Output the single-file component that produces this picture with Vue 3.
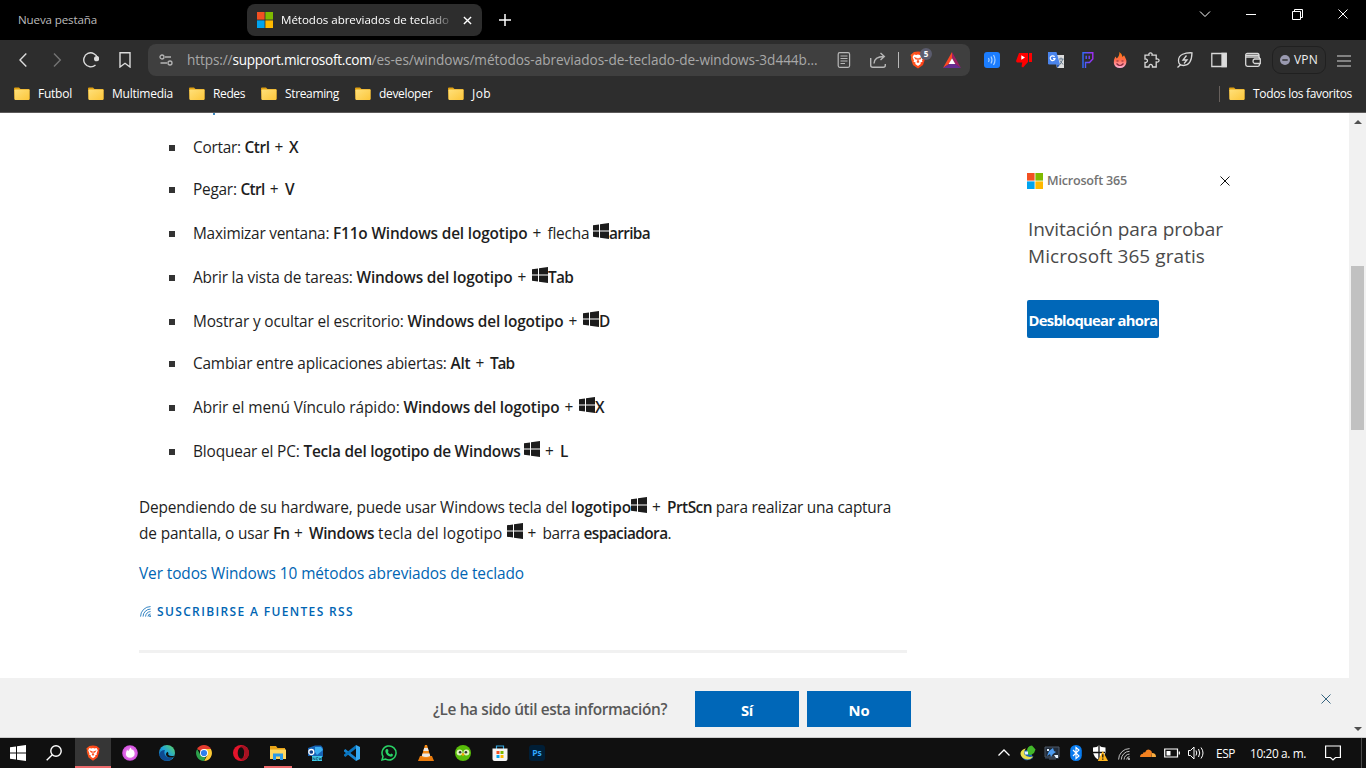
<script setup>
// Sets the tracking of a text run so that it takes the given width in pixels.
const vFit = {
  mounted(el, { value }) {
    const n = Array.from(el.textContent).length
    const natural = el.getBoundingClientRect().width
    el.style.letterSpacing = (value - natural) / n + 'px'
  },
}

const bookmarks = [
  { name: 'Futbol', w: 34 },
  { name: 'Multimedia', w: 61 },
  { name: 'Redes', w: 32 },
  { name: 'Streaming', w: 54 },
  { name: 'developer', w: 53 },
  { name: 'Job', w: 19 },
]

// Text runs: [text, width, bold]; 'win' stands for the Windows logo.
const shortcuts = [
  [['Cortar: ', 51.5], ['Ctrl', 25, 1], [' + ', 19.5], ['X', 10, 1]],
  [['Pegar: ', 47.5], ['Ctrl', 24, 1], [' + ', 20.5], ['V', 10, 1]],
  [['Maximizar ventana: ', 140], ['F11o Windows del logotipo', 194.5, 1], [' + ', 20], ['flecha ', 45.5], 'win', ['arriba', 41, 1]],
  [['Abrir la vista de tareas: ', 163.5], ['Windows del logotipo', 156, 1], [' + ', 19.5], 'win', ['Tab', 25, 1]],
  [['Mostrar y ocultar el escritorio: ', 214.5], ['Windows del logotipo', 156, 1], [' + ', 19.5], 'win', ['D', 12, 1]],
  [['Cambiar entre aplicaciones abiertas: ', 257.5], ['Alt', 20, 1], [' + ', 19.5], ['Tab', 24, 1]],
  [['Abrir el menú Vínculo rápido: ', 210.5], ['Windows del logotipo', 156, 1], [' + ', 19.5], 'win', ['X', 10, 1]],
  [['Bloquear el PC: ', 110.5], ['Tecla del logotipo de Windows', 217, 1], [' ', 3.5], 'win', [' + ', 20], ['L', 8, 1]],
]
const note = [
  [['Dependiendo de su hardware, puede usar Windows tecla del ', 432], ['logotipo', 60, 1], 'win', [' + ', 20], ['PrtScn', 45, 1], [' para realizar una captura', 179]],
  [['de pantalla, o usar ', 134], ['Fn', 16, 1], [' + ', 20], ['Windows', 65, 1], [' tecla del logotipo ', 132.5], 'win', [' + ', 20], ['barra ', 41], ['espaciadora', 84, 1], ['.', 4]],
]
</script>

<template>
  <svg class="defs" aria-hidden="true">
    <defs>
      <linearGradient id="gFolder" x1="0" y1="0" x2="1" y2="1"><stop offset="0" stop-color="#ffe07a" /><stop offset="1" stop-color="#fcc63a" /></linearGradient>
      <linearGradient id="gFire" x1="0" y1="0" x2="0" y2="1"><stop offset="0" stop-color="#ff7a00" /><stop offset=".5" stop-color="#ff6a4d" /><stop offset="1" stop-color="#ffb0d8" /></linearGradient>
      <linearGradient id="gP" x1="0" y1="0" x2="1" y2="0"><stop offset="0" stop-color="#2f6bff" /><stop offset="1" stop-color="#a32cf5" /></linearGradient>
      <linearGradient id="gBrave" x1="0" y1="0" x2="1" y2="0"><stop offset="0" stop-color="#ff5a1f" /><stop offset="1" stop-color="#fb3b15" /></linearGradient>
      <linearGradient id="gEdge" x1="0" y1="1" x2="1" y2="0"><stop offset="0" stop-color="#0c59a4" /><stop offset=".5" stop-color="#1fa3dc" /><stop offset="1" stop-color="#63d957" /></linearGradient>
      <radialGradient id="gPink"><stop offset="0" stop-color="#f79bf0" /><stop offset="1" stop-color="#d24fe0" /></radialGradient>
      <symbol id="folder" viewBox="0 0 16 14"><path d="M0 1.5Q0 .5 1 .5H5L6.5 2H15Q15.5 2 15.5 2.6V12H.5Z" fill="#e0a010" /><rect x=".5" y="2.5" width="15" height="10.5" rx=".8" fill="url(#gFolder)" /></symbol>
      <symbol id="ms" viewBox="0 0 16 16"><path fill="#f25022" d="M0 0h7.6v7.6H0z" /><path fill="#7fba00" d="M8.4 0H16v7.6H8.4z" /><path fill="#00a4ef" d="M0 8.4h7.6V16H0z" /><path fill="#ffb900" d="M8.4 8.4H16V16H8.4z" /></symbol>
      <symbol id="win" viewBox="0 0 16 16"><path d="M0 2.3 6 1.4V7.5H0ZM7 1.2 16 0V7.5H7ZM0 8.5H6V14.6L0 13.7ZM7 8.5H16V16L7 14.8Z" /></symbol>
      <symbol id="brave" viewBox="0 0 16 18"><path fill="url(#gBrave)" d="M4 1 8 .5 12 1 13.5 2.2 15.5 4 14.8 6 15 8 13 14 8 17.6 3 14 1 8 1.2 6 .5 4 2.5 2.2Z" /><path fill="#fff" d="M4 3.4 6.2 4 8 3.5 9.8 4 12 3.4 13.4 6 12 9.5 12.5 10.7 10.5 11.5 10.7 13 8 15 5.3 13 5.5 11.5 3.5 10.7 4 9.5 2.6 6Z" /><path fill="#fb4a1a" d="M3.8 6 7 7 6.3 9.3ZM12.2 6 9 7 9.7 9.3ZM7.3 7h1.4V10L9.6 11 8 12 6.4 11 7.3 10Z" /></symbol>
      <symbol id="x" viewBox="0 0 10 10"><path d="M.5.5 9.5 9.5M9.5.5.5 9.5" fill="none" stroke="currentColor" /></symbol>
      <symbol id="wifi" viewBox="0 0 14 14"><g fill="none" stroke="currentColor"><path d="M.7 13.5A12.8 12.8 0 0 1 13.5.7M3.9 13.5A9.6 9.6 0 0 1 13.5 3.9M7.1 13.5A6.4 6.4 0 0 1 13.5 7.1M10.2 13.5A3.3 3.3 0 0 1 13.5 10.2" /></g><circle cx="12.8" cy="12.8" r="1.1" fill="currentColor" /></symbol>
    </defs>
  </svg>

  <div class="screen">
    <header class="tabs">
      <div class="tab idle"><span v-fit="79">Nueva pestaña</span></div>
      <div class="tab active">
        <svg class="i16"><use href="#ms" /></svg>
        <div class="tab-title"><span v-fit="168">Métodos abreviados de teclado</span></div>
        <svg class="tab-x" viewBox="0 0 10 10"><path d="M1 1 9 9M9 1 1 9" /></svg>
      </div>
      <svg class="new" viewBox="0 0 12 12"><path d="M6 0V12M0 6H12" /></svg>
      <div class="window-ctl">
        <svg width="12" height="12" viewBox="0 0 12 12"><path d="M1 3.5 6 8.5 11 3.5" /></svg>
        <svg width="10" height="12" viewBox="0 0 10 12"><path d="M0 6.5H10" /></svg>
        <svg width="11" height="11" viewBox="0 0 11 11"><path d="M.5 2.5H8.5V10.5H.5ZM2.5 2.5V.5H10.5V8.5H8.5" /></svg>
        <svg width="10" height="10"><use href="#x" /></svg>
      </div>
    </header>

    <div class="toolbar">
      <div class="nav">
        <svg viewBox="0 0 16 16"><path d="M11.3 1.5 5 8 11.3 14.5" /></svg>
        <svg viewBox="0 0 16 16" class="dim"><path d="M5 1.5 11.3 8 5 14.5" /></svg>
        <svg viewBox="0 0 16 16"><path d="M12.5 13A7 7 0 1 1 14.5 6" /><circle cx="13.6" cy="6.7" r="1.9" class="solid" /></svg>
        <svg viewBox="0 0 16 16"><path d="M3 .8H13V15L8 11.3 3 15Z" /></svg>
      </div>
      <div class="url">
        <svg class="tune" viewBox="0 0 14 12"><circle cx="3" cy="3" r="2" /><circle cx="11" cy="9" r="2" /><path d="M6 3H12M1.5 9H8" /></svg>
        <div class="address"><span v-fit="45.5">https://</span><span v-fit="139" class="host">support.microsoft.com</span><span v-fit="446">/es-es/windows/métodos-abreviados-de-teclado-de-windows-3d444b...</span></div>
        <svg class="reader" viewBox="0 0 14 16"><rect x="1.2" y=".7" width="11.4" height="14.6" rx="1.5" /><path d="M3.5 4H10.5M3.5 6.5H10.5M3.5 9H10.5M3.5 11.5H8" /></svg>
        <svg class="share" viewBox="0 0 16 16"><path d="M.7 6V13.3Q.7 15.3 2.7 15.3H13.3Q15.3 15.3 15.3 13.3V12M4 11.5C4.2 6.5 7.5 4.5 14 4.5M10.5 1 14.3 4.5 10.5 8" /></svg>
        <i class="rule"></i>
        <div class="shield"><svg width="16" height="18"><use href="#brave" /></svg><b>5</b></div>
        <svg class="bat" viewBox="0 0 18 16"><path fill="#ff4724" d="M9 0 0 16 6 12 9 6Z" /><path fill="#9e1f63" d="M9 0 18 16 12 12 9 6Z" /><path fill="#662d91" d="M0 16H18L12 12H6Z" /><path fill="#fff" d="M9 6.2 12.3 12H5.7Z" /></svg>
      </div>
      <div class="ext">
        <svg viewBox="0 0 16 16"><rect width="16" height="16" rx="3" fill="#1b7dff" /><g fill="none" stroke="#a9d0ff" stroke-width="1.2"><path d="M4.5 6Q5.8 8 4.5 10M7 4.5Q9 8 7 11.5M9.5 3Q12.5 8 9.5 13" /></g></svg>
        <svg viewBox="0 0 16 16"><path fill="#f00" d="M3 1H12V10L7 15.5 5.5 14.5 6.3 10.5H1.2Q0 10 .2 8.5ZM13 1H16V10H13Z" /><path fill="#fff" d="M5.3 3.2 9 5.5 5.3 7.8Z" /></svg>
        <svg viewBox="0 0 16 16"><path fill="#dcdcdc" d="M6 3H16V16H9Z" /><path fill="#4a84ec" d="M0 0H8.5L12 12.5H1.3Q0 12.5 0 11.3Z" /><path fill="#2759b4" d="M8 12.5H12L9.5 16Z" /><path d="M6.6 4.8A2.4 2.4 0 1 0 7 6.6H5" fill="none" stroke="#fff" stroke-width="1.2" /><path d="M11 7H15.5M13 5.5V7M12 12.5 15 7M12 8.5 15 12.5" fill="none" stroke="#65798c" /></svg>
        <svg viewBox="0 0 16 16"><path d="M3 16V.8H12.8V7L9.5 10.5H5.5V16M6.2 3.7V7M9.2 3.7V7" fill="none" stroke="url(#gP)" stroke-width="1.4" /></svg>
        <svg viewBox="0 0 16 16"><path fill="url(#gFire)" d="M7.3 0Q10.5 2 10.6 5L12 3.3Q15 8 14.3 11 13 16 8 16 2.5 16 1.8 11 1.5 8 3.3 4.5L4.8 6.5Q7.8 3.5 7.3 0Z" /><path d="M4.5 9H6.5M9.5 9H11.5M4.5 11.5Q8 15.5 11.5 11.5" fill="none" stroke="#8c2b3c" stroke-width="1.2" /></svg>
        <svg viewBox="0 0 16 16" class="ln"><path d="M1 3.2H5C4 0 9 0 8 3.2H12.2V7C16 6 16 11 12.2 10V15H8.5C9 11.5 4.5 11.5 5 15H1V10.5C4.3 11 4.3 6.5 1 7Z" /></svg>
        <svg viewBox="0 0 16 16" class="ln leaf"><path d="M.5 15.5 3.8 12.5M15 .8C8 .5 1.5 2.5 1.5 8.5 1.5 12 3.5 13.5 6.5 13.5 12.5 13.5 14.8 8 15 .8Z" /><path d="M9.5 3.5 6 8H10L7 11.5" /></svg>
        <svg viewBox="0 0 16 16" class="ln side"><path d="M.8 1.5H15.2V14.5H.8Z" /><path class="solid" d="M11 1.5H15.2V14.5H11Z" /></svg>
        <svg viewBox="0 0 16 16" class="ln wallet"><path d="M14 5V3Q14 1.5 12.5 1.5H2.3Q.7 1.5.7 3V12.5Q.7 14.3 2.5 14.3H13Q14.5 14.3 14.5 12.5V11.5M.7 3.3H14M.7 5H13Q14.7 5 14.7 6.5M9.5 7H15.3V11.5H9.5Q8 11 8 9.2T9.5 7Z" /></svg>
      </div>
      <div class="vpn"><svg viewBox="0 0 10 10"><circle cx="5" cy="5" r="5" fill="#9a9ab0" /><path d="M2.3 5H7.7" stroke="#2d2d2d" stroke-width="1.4" /></svg><span v-fit="24">VPN</span></div>
      <svg class="burger" viewBox="0 0 14 12"><path d="M0 1.5H14M0 6.5H14M0 11.5H14" /></svg>
    </div>

    <nav class="bookmarks">
      <div v-for="b in bookmarks" :key="b.name" class="bookmark"><svg class="fold"><use href="#folder" /></svg><span v-fit="b.w">{{ b.name }}</span></div>
      <i></i>
      <div class="bookmark"><svg class="fold"><use href="#folder" /></svg><span v-fit="99">Todos los favoritos</span></div>
    </nav>

    <div class="view">
      <div class="page">
        <div class="cols">
          <main>
            <i class="cut"></i>
            <ul>
              <li v-for="(row, r) in shortcuts" :key="r" :class="{ tall: row.includes('win') }">
                <template v-for="(s, k) in row" :key="k"><svg v-if="s === 'win'" class="win"><use href="#win" /></svg><span v-else v-fit="s[1]" :class="{ strong: s[2] }">{{ s[0] }}</span></template>
              </li>
            </ul>
            <div class="note">
              <p v-for="(row, r) in note" :key="r"><template v-for="(s, k) in row" :key="k"><svg v-if="s === 'win'" class="win"><use href="#win" /></svg><span v-else v-fit="s[1]" :class="{ strong: s[2] }">{{ s[0] }}</span></template></p>
            </div>
            <a class="all"><span v-fit="385">Ver todos Windows 10 métodos abreviados de teclado</span></a>
            <a class="rss"><svg width="11" height="11"><use href="#wifi" /></svg><span v-fit="197">SUSCRIBIRSE A FUENTES RSS</span></a>
            <hr />
          </main>
          <aside>
            <div class="brand"><svg class="i16"><use href="#ms" /></svg><span v-fit="80">Microsoft 365</span><svg class="close"><use href="#x" /></svg></div>
            <h2><span v-fit="195">Invitación para probar</span><br /><span v-fit="177">Microsoft 365 gratis</span></h2>
            <button><span v-fit="129">Desbloquear ahora</span></button>
          </aside>
        </div>
        <footer>
          <span v-fit="234" class="ask">¿Le ha sido útil esta información?</span>
          <button><span v-fit="12">Sí</span></button>
          <button><span v-fit="21">No</span></button>
          <svg class="close"><use href="#x" /></svg>
        </footer>
      </div>
      <div class="scroll">
        <svg viewBox="0 0 8 4"><path d="M0 4 4 0 8 4Z" /></svg>
        <div class="thumb"></div>
        <svg viewBox="0 0 8 4"><path d="M0 0 4 4 8 0Z" /></svg>
      </div>
    </div>

    <div class="taskbar">
      <div class="apps">
        <div><svg viewBox="0 0 16 16" fill="#fff"><use href="#win" /></svg></div>
        <div class="find"><svg viewBox="0 0 16 16" fill="none" stroke="#fff" stroke-width="1.4"><circle cx="10" cy="6" r="5.2" /><path d="M6.3 9.7.7 15.3" /></svg></div>
        <div class="on"><svg><use href="#brave" /></svg></div>
        <div><svg viewBox="0 0 16 16"><circle cx="8" cy="8" r="7.8" fill="url(#gPink)" /><path fill="#fff" d="M8.5 2.5 10 5 11 4.5Q14 9 11.5 11.5 8 14 4.8 11.5 3 9 5 5L6.5 6Z" /></svg></div>
        <div><svg viewBox="0 0 16 16"><circle cx="8" cy="8" r="8" fill="url(#gEdge)" /><path fill="#0d4a91" d="M.3 9.8Q1 5 6 5 4.5 7.5 6.3 10.5 8.8 13.8 14.2 12.3 10.5 17.3 5 15.3 1.3 13.8.3 9.8Z" /><path fill="#101010" d="M8.5 6.8Q10 8 9.3 9.8 11.5 11.8 15.7 10.5L14.3 12.3Q8.5 13.5 7 9.7 6.8 7.8 8.5 6.8Z" /></svg></div>
        <div><svg viewBox="0 0 16 16"><path fill="#e33b2e" d="M8 8 1.1 4A8 8 0 0 1 14.9 4Z" /><path fill="#fcc934" d="M8 8V4H14.9A8 8 0 0 1 8 16L11.5 10Z" /><path fill="#2da14c" d="M8 16A8 8 0 0 1 1.1 4L4.5 10 8 12 10 11Z" /><circle cx="8" cy="8" r="4" fill="#fff" /><circle cx="8" cy="8" r="3.1" fill="#2d7ff0" /></svg></div>
        <div><svg viewBox="0 0 16 16"><circle cx="8" cy="8" r="8" fill="#e3142b" /><path fill="#a51222" d="M11 1Q16 3 16 8T11 15Q8 16 7 14 13 11 12 8T7 2Q8 0 11 1Z" /><ellipse cx="8" cy="8" rx="3.3" ry="5.7" fill="#101010" /></svg></div>
        <div class="open"><svg viewBox="0 0 16 16"><path fill="#e8a317" d="M0 1H6L7.5 3H15V9H0Z" /><path fill="#ffd75e" d="M0 4.5H16V14H0Z" /><path fill="#2b9ae8" d="M3 15V8.5H13V15H10V11.5H6V15Z" /></svg></div>
        <div><svg viewBox="0 0 16 16"><path fill="#1763b5" d="M1 3 8 .5H14L16 3V12H5V11H1Z" /><path fill="#3caef0" d="M8 2H14L16 5 10 10 8 7Z" /><circle cx="4.3" cy="7" r="2.5" fill="#123f87" stroke="#fff" stroke-width="1.3" /><path fill="#3ecbe8" d="M5 11H15V16H5Z" /><path d="M6 15V12.5L8 15V12.5M9.5 12.5H11M9.5 15H11M9.7 12.5V15M12 12.5 12.5 15 13.2 13 14 15 14.5 12.5" fill="none" stroke="#114c68" stroke-width=".7" /></svg></div>
        <div><svg viewBox="0 0 16 16"><path fill="#1684d1" d="M0 5.2 1.3 4 12 12.5V16L0 6.4Z" /><path fill="#0873bd" d="M0 10.8 1.3 12 12 3.5V0L0 9.6Z" /><path fill="#35aaf3" d="M12 0 16 2V14L12 16Z" /></svg></div>
        <div><svg viewBox="0 0 16 16" fill="none" stroke="#29d366" stroke-width="1.5"><path d="M1 15 2 11.5A7 7 0 1 1 4.7 14.1Z" /><path fill="#29d366" stroke="none" d="M5.5 4 7 4.3 7.5 6.2 6.8 7.1Q7.7 8.8 9.3 9.4L10.2 8.5 12 9.4Q12 11.5 10 11.7 5 11 4.3 6 4.5 4.5 5.5 4Z" /></svg></div>
        <div><svg viewBox="0 0 16 16"><path fill="#e97b0d" d="M2 11H14L16 16H0Z" /><path fill="#f58b18" d="M7 0H9L12.5 12Q8 14 3.5 12Z" /><path fill="#e8e8e8" d="M6.2 3H9.8L10.7 6H5.3ZM4.5 8.5H11.5L12.2 11Q8 12.8 3.8 11Z" /></svg></div>
        <div><svg viewBox="0 0 16 16"><circle cx="8" cy="8" r="8" fill="#58bd09" /><rect x="1.6" y="4.5" width="6" height="6" rx="3" fill="#e0f5bb" /><rect x="8.4" y="4.5" width="6" height="6" rx="3" fill="#e0f5bb" /><circle cx="5.1" cy="7.3" r="1.3" fill="#333" /><circle cx="10.9" cy="7.3" r="1.3" fill="#333" /><path fill="#f7a500" d="M6.3 9 8 8 9.7 9 8 11.5Z" /></svg></div>
        <div><svg viewBox="0 0 16 16"><path d="M4.5 4V1H11.5V4" fill="none" stroke="#35a7df" stroke-width="1.2" /><path fill="#f5f5f5" d="M.5 3.5H15.5V14Q15.5 16 13.5 16H2.5Q.5 16 .5 14Z" /><path fill="#f25022" d="M4.5 6H7.5V9H4.5Z" /><path fill="#7fba00" d="M8.5 6H11.5V9H8.5Z" /><path fill="#00a4ef" d="M4.5 10H7.5V13H4.5Z" /><path fill="#ffb900" d="M8.5 10H11.5V13H8.5Z" /></svg></div>
        <div><span class="ps">Ps</span></div>
      </div>
      <div class="tray">
        <svg viewBox="0 0 16 16" class="tl"><path d="M2.5 10.5 8 5 13.5 10.5" stroke-width="1.3" /></svg>
        <svg viewBox="0 0 16 16"><path fill="#1d63b0" d="M1 8Q4 5 7 5L12 10 13 13Q9 16 5 15 1 13 1 8Z" /><path fill="#e9df4d" d="M.5 8Q1.5 4 6 3.5 3.5 6 4.5 9.5 7 13 13.5 11.5 10 15.5 5 14 .3 12 .5 8Z" /><path fill="#42b72a" d="M7 6Q7 1 12 .5L15.5 4.5 14 8 11 10Q7 10 7 6Z" /><path fill="#dff2ff" d="M4.5 6.5H8V9.5H5Z" /></svg>
        <svg viewBox="0 0 16 16"><path fill="#222d3b" d="M1 2H15V14H1Z" /><path d="M1 2H15V12H1ZM5 14H12" fill="none" stroke="#4d5968" /><path fill="#4c9bf0" d="M9 3 10 6 12 7 9 9 7 12 6 9 3 11 5 6Z" /><path fill="#e8f4ff" d="M3 4H5V6H3ZM10 10H14V13H12Z" /></svg>
        <svg viewBox="0 0 16 16"><rect x="2.2" width="11.6" height="16" rx="5.5" fill="#087cf0" /><path d="M5 5 11 11 8 13.5V2.5L11 5 5 11" fill="none" stroke="#fff" stroke-width="1.1" /></svg>
        <svg viewBox="0 0 16 16"><path fill="#fff" d="M1 2.5Q5 2.5 7 .5Q9 2.5 13.5 2.5V7Q13 12 7 15 1.5 12 1 7Z" /><path d="M7 1V15M1 7.5H13" stroke="#111" stroke-width="1.3" /><path fill="#ffb51b" d="M10.8 6 16 16H5.8Z" /><path d="M10.8 9.2V12.6M10.8 13.5V14.8" stroke="#111" stroke-width="1.3" /></svg>
        <svg class="wf" viewBox="0 0 14 14"><use href="#wifi" /></svg>
        <svg viewBox="0 0 16 16"><path fill="#f48120" d="M0 12Q0 9 3 8.8 3 7 5 7.4 6.7 3.2 10 5 12 6 12 8L11 12Z" /><path fill="#faad3f" d="M11.3 12 12 8Q16 8 16 12Z" /></svg>
        <svg viewBox="0 0 16 16" class="tl"><path d="M.7 4H13.5V12H.7ZM15.3 6.5V9.5" stroke-width="1.2" /><path fill="#fff" stroke="none" d="M2.5 6H6.5V10.5H2.5Z" /></svg>
        <svg viewBox="0 0 16 16" class="tl"><path d="M.5 5.5H2.5L6 2V14L2.5 10.5H.5ZM8 5.5Q9.5 8 8 10.5M10.5 4Q13 8 10.5 12M13 2.5Q17 8 13 13.5" /></svg>
      </div>
      <span v-fit="19" class="esp">ESP</span>
      <span v-fit="56" class="time">10:20 a. m.</span>
      <svg class="bell" viewBox="0 0 16 16"><path d="M.6 1H15.4V12.5H10.5L8 15 5.5 12.5H.6Z" /></svg>
      <i class="desk"></i>
    </div>
  </div>
</template>

<style>
body { margin: 0; overflow: hidden; }
</style>

<style scoped>
.screen { width: 1366px; height: 768px; overflow: hidden; background: #fff; font-family: "Open Sans", "Noto Sans", sans-serif; display: flex; flex-direction: column; }
.defs { position: absolute; width: 0; height: 0; }
svg { display: block; flex: none; }
span { white-space: pre; }
.i16 { width: 16px; height: 16px; }
.tabs { height: 40px; flex: none; background: #000; display: flex; align-items: center; font-size: 11.6px; color: #bcbcbc; box-sizing: border-box; }
.idle { width: 229px; padding-left: 18px; margin-top: -2px; }
.active { width: 235px; height: 32px; box-sizing: border-box; padding: 0 10px; background: #2d2d2d; border-radius: 8px; display: flex; align-items: center; color: #fff; }
.tab-title { width: 170px; margin-left: 8px; margin-top: -1px; -webkit-mask-image: linear-gradient(90deg, #000 148px, transparent 174px); mask-image: linear-gradient(90deg, #000 148px, transparent 174px); }
.tab-x { width: 9px; height: 9px; margin-left: 12px; fill: none; stroke: #fff; stroke-width: 1.5; }
.new { width: 12px; height: 12px; margin-left: 17px; fill: none; stroke: #fff; stroke-width: 1.5; }
.window-ctl { margin-left: auto; margin-right: 18px; margin-top: -12px; display: flex; align-items: center; gap: 35px; color: #fff; fill: none; stroke: #fff; }
.window-ctl svg:nth-child(2) { margin-right: 1px; }
.toolbar { height: 40px; flex: none; background: #2d2d2d; display: flex; align-items: center; }
.nav { display: flex; gap: 18px; padding-left: 15px; fill: none; stroke: #dcdcdc; stroke-width: 1.4; width: 133px; }
.nav svg { width: 16px; height: 16px; }
.nav .dim { opacity: .4; }
.solid { fill: #dcdcdc; }
.url { width: 822px; height: 32px; background: #3f3f3f; border-radius: 8px; display: flex; align-items: center; }
.tune { width: 14px; height: 12px; margin-left: 11px; fill: none; stroke: #b5b5b5; stroke-width: 1.3; }
.address { margin-left: 14px; font-size: 13.6px; line-height: 20px; color: #a8a8a8; width: 650px; white-space: nowrap; }
.host { color: #fff; }
.reader { width: 14px; height: 16px; fill: none; stroke: #b8b8b8; stroke-width: 1.2; }
.share { width: 16px; height: 16px; margin-left: 19px; fill: none; stroke: #b8b8b8; stroke-width: 1.4; }
.rule { width: 1px; height: 16px; background: #b8b8b8; margin-left: 12px; }
.shield { position: relative; margin-left: 11px; }
.shield b { position: absolute; left: 10px; top: -3px; width: 12px; height: 12px; border-radius: 6px; background: #5b5c6e; color: #fff; font-size: 8px; line-height: 12px; text-align: center; }
.bat { width: 18px; height: 16px; margin-left: 17px; }
.ext { display: flex; margin-left: 14px; }
.ext svg { width: 16px; height: 16px; margin-right: 16px; }
.ln { fill: none; stroke: #d8d8d8; stroke-width: 1.3; }
.ext .leaf { margin-left: 1px; }
.ext .side { margin-left: 2px; margin-right: 18px; }
.ext .wallet { margin-right: 11px; }
.vpn { width: 54px; height: 28px; box-sizing: border-box; border: 1px solid #202020; border-radius: 9px; display: flex; align-items: center; justify-content: center; gap: 4px; color: #f0f0f0; font-size: 12px; font-weight: 500; }
.vpn span { margin-top: -2px; }
.vpn svg { width: 10px; height: 10px; }
.burger { width: 14px; height: 13px; margin-left: 11px; stroke: #d8d8d8; stroke-width: 1; }
.bookmarks { height: 32px; flex: none; border-bottom: 1px solid #5c5a5a; background: #2d2d2d; display: flex; align-items: flex-start; gap: 16px; padding-left: 14px; padding-right: 14px; color: #fff; font-size: 12px; line-height: 16px; }
.bookmark { display: flex; align-items: center; gap: 8px; margin-top: 6px; height: 16px; }
.fold { width: 16px; height: 14px; }
.bookmarks > i { width: 1px; height: 16px; margin: 6px -7px 0 auto; background: #67605c; }
.view { height: 624px; flex: none; display: flex; border-bottom: 1px solid #ccc; }
.page { width: 1349px; display: flex; flex-direction: column; color: #1e1e1e; }
.cols { height: 565px; display: flex; }
main { width: 768px; padding-left: 139px; padding-top: 6px; font-size: 15.4px; line-height: 26px; position: relative; }
.cut { position: absolute; left: 213px; top: 0; width: 2px; height: 2px; background: #3d8ac2; }
ul { list-style: none; margin: 0; padding: 0 0 0 54px; }
li { height: 26px; margin-top: 16px; display: flex; position: relative; }
li.tall { margin-top: 18px; }
li::before { content: ""; position: absolute; left: -24px; top: 10px; width: 6px; height: 6px; background: #333; }
.strong { font-weight: 600; }
.win { width: 16px; height: 16px; margin-top: 2px; fill: #1c1c1c; }
.note { margin-top: 30px; }
p { margin: 0; display: flex; height: 26px; }
.all { display: flex; height: 26px; margin-top: 14px; color: #0065b3; }
.rss { display: flex; align-items: center; gap: 6px; margin-top: 14px; height: 21px; padding-left: 1px; font-size: 12px; font-weight: 600; color: #0065b3; }
hr { margin: 28px 0 0; border: 0; height: 3px; background: #f1f1f1; }
aside { margin-left: 120px; padding-top: 59px; width: 204px; }
.brand { display: flex; align-items: center; height: 18px; gap: 4px; font-size: 12.6px; font-weight: 600; color: #737373; }
.brand span { margin-top: -2px; }
.close { width: 10px; height: 10px; }
.brand .close { margin-left: auto; margin-right: 1px; color: #111; }
h2 { margin: 26px 0 0 1px; font-size: 19px; line-height: 27px; font-weight: 400; color: #4a4a4a; }
button { border: 0; padding: 0; font: 700 14.8px/20px "Open Sans", "Noto Sans", sans-serif; color: #fff; background: #0067b8; }
button span { display: block; margin: 1px auto 0; width: max-content; }
aside button { width: 132px; height: 38px; margin-top: 30px; border-radius: 2px; }
footer { height: 59px; background: #f1f1f1; display: flex; align-items: flex-start; padding-left: 433px; box-sizing: border-box; padding-top: 13px; }
.ask { font-size: 15.4px; line-height: 37px; font-weight: 600; color: #585858; margin-right: 28px; }
footer button { width: 104px; height: 36px; margin-right: 8px; }
footer .close { margin: 3px 18px 0 auto; color: #36647f; }
.scroll { width: 17px; height: 624px; background: #f1f1f1; display: flex; flex-direction: column; align-items: center; box-sizing: border-box; padding: 7px 0 6px; fill: #505050; }
.scroll svg { width: 8px; height: 4px; }
.thumb { width: 13px; height: 164px; margin-top: 142px; margin-bottom: auto; background: #c1c1c1; }
.taskbar { height: 30px; flex: none; background: #101010; display: flex; align-items: center; color: #fff; font-size: 11.8px; }
.apps { display: flex; gap: 1px; width: 992px; height: 30px; }
.apps > div { width: 36px; height: 30px; display: flex; align-items: center; justify-content: center; box-sizing: border-box; }
.apps svg { width: 16px; height: 16px; }
.apps .find { margin-left: -1px; margin-right: 2px; }
.apps .on { background: #363636; border-bottom: 2px solid #ec6a6c; padding-top: 2px; }
.apps .open { position: relative; }
.apps .open::after { content: ""; position: absolute; left: 4px; bottom: 0; width: 28px; height: 2px; background: #ec6a6c; }
.ps { width: 16px; height: 16px; border-radius: 3px; background: #001e36; color: #31a8ff; font-size: 8.5px; font-weight: 700; line-height: 15px; text-align: center; }
.tray { display: flex; width: 224px; }
.tray svg { width: 16px; height: 16px; margin: 0 4px; }
.tray .wf { width: 12px; height: 12px; margin: 3px 6px 0; color: #e0e0e0; }
.tl { fill: none; stroke: #fff; }
.esp, .time { margin-top: -1px; }
.time { margin-left: 15px; }
.bell { width: 16px; height: 16px; margin-left: 19px; fill: none; stroke: #fff; stroke-width: 1.2; }
.desk { width: 1px; height: 30px; margin-left: 20px; background: #4a4a4a; }
</style>
